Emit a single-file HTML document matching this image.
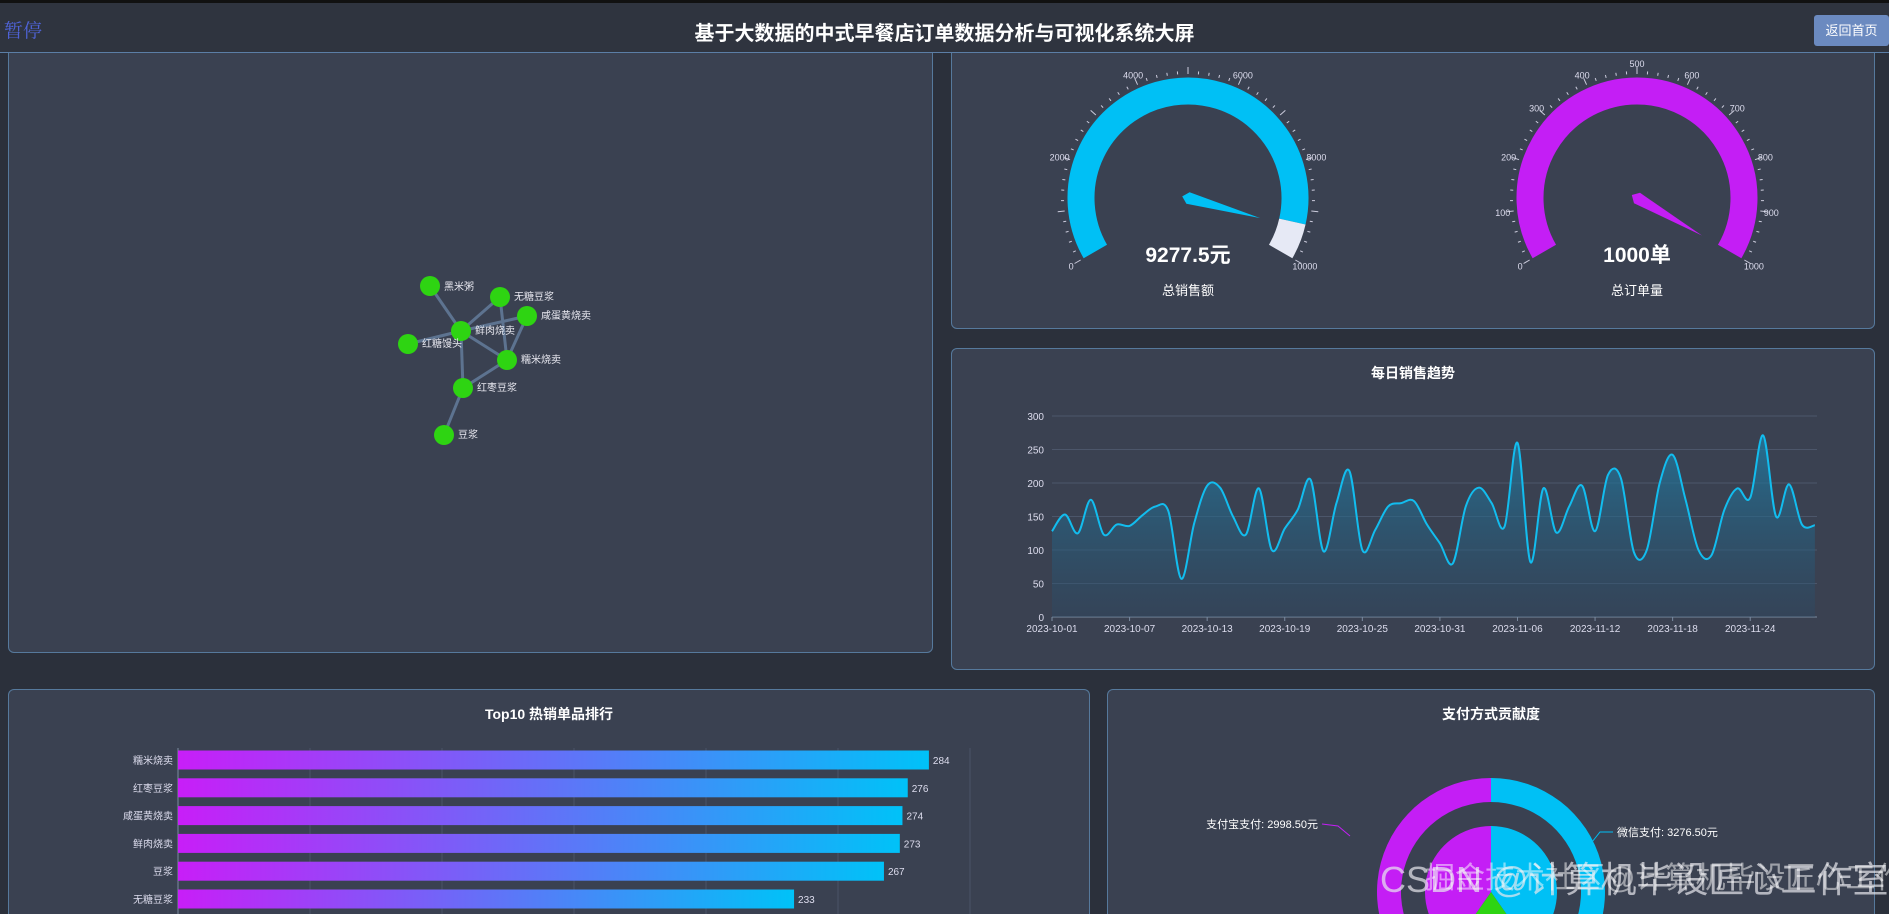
<!DOCTYPE html>
<html><head><meta charset="utf-8">
<style>
*{margin:0;padding:0;box-sizing:border-box}
body{width:1889px;height:914px;overflow:hidden;background:#2b303b;font-family:"Liberation Sans","Noto Sans CJK SC",sans-serif;position:relative;color:#fff}
.hdr{position:absolute;left:0;top:0;width:1889px;height:53px;background:#2f343f;border-top:3px solid #111;border-bottom:1px solid #5b7ea6}
.hdr h1{position:absolute;left:0;right:0;top:14px;text-align:center;font-size:20px;font-weight:bold;color:#fff}
.pause{position:absolute;left:4px;top:13px;font-size:19px;color:#4f63d8;font-family:"Noto Serif CJK SC",serif}
.btn{position:absolute;left:1814px;top:12px;width:75px;height:31px;background:#6b8ac0;border-radius:3px;font-size:13px;line-height:31px;text-align:center;color:#fff}
.p{position:absolute;background:#3a4151;border:1px solid #56799c;border-radius:6px}
.t{position:absolute;left:0;right:0;text-align:center;font-size:14px;font-weight:bold;color:#fff}
svg{position:absolute;left:0;top:0}
</style></head><body>
<div class="p" style="left:8px;top:40px;width:925px;height:613px"></div>
<div class="p" style="left:951px;top:40px;width:924px;height:289px"></div>
<div class="p" style="left:951px;top:348px;width:924px;height:322px"><div class="t" style="top:14px">每日销售趋势</div></div>
<div class="p" style="left:8px;top:689px;width:1082px;height:225px;border-bottom:none;border-radius:6px 6px 0 0"><div class="t" style="top:14px">Top10 热销单品排行</div></div>
<div class="p" style="left:1107px;top:689px;width:768px;height:225px;border-bottom:none;border-radius:6px 6px 0 0"><div class="t" style="top:14px">支付方式贡献度</div></div>
<div class="hdr"><div class="pause">暂停</div><h1>基于大数据的中式早餐店订单数据分析与可视化系统大屏</h1><div class="btn">返回首页</div></div>

<svg width="1889" height="914" id="s" font-family="Liberation Sans, Noto Sans CJK SC, sans-serif">
<defs>
<linearGradient id="ag" x1="0" x2="0" y1="0" y2="1"><stop offset="0" stop-color="#1e7fa8" stop-opacity=".75"/><stop offset="1" stop-color="#2a4a66" stop-opacity=".35"/></linearGradient>
</defs>
<g stroke="#5d7390" stroke-width="3">
<line x1="430" y1="286" x2="461" y2="331"/><line x1="500" y1="297" x2="461" y2="331"/><line x1="500" y1="297" x2="507" y2="360"/>
<line x1="527" y1="316" x2="461" y2="331"/><line x1="527" y1="316" x2="507" y2="360"/><line x1="461" y1="331" x2="408" y2="344"/>
<line x1="461" y1="331" x2="507" y2="360"/><line x1="461" y1="331" x2="463" y2="388"/><line x1="507" y1="360" x2="463" y2="388"/>
<line x1="463" y1="388" x2="444" y2="435"/></g>
<g fill="#2ed412"><circle cx="430" cy="286" r="10"/><circle cx="500" cy="297" r="10"/><circle cx="527" cy="316" r="10"/><circle cx="461" cy="331" r="10"/><circle cx="408" cy="344" r="10"/><circle cx="507" cy="360" r="10"/><circle cx="463" cy="388" r="10"/><circle cx="444" cy="435" r="10"/></g>
<g fill="#e8e8f0" font-size="10"><text x="444" y="290">黑米粥</text><text x="514" y="300">无糖豆浆</text><text x="541" y="319">咸蛋黄烧卖</text><text x="475" y="334">鲜肉烧卖</text><text x="422" y="347">红糖馒头</text><text x="521" y="363">糯米烧卖</text><text x="477" y="391">红枣豆浆</text><text x="458" y="438">豆浆</text></g>
<g id="gauges"></g>
<g font-weight="bold" font-size="21" fill="#fff" text-anchor="middle"><text x="1188" y="262">9277.5元</text><text x="1637" y="262">1000单</text></g>
<g font-size="13" fill="#fff" text-anchor="middle"><text x="1188" y="295">总销售额</text><text x="1637" y="295">总订单量</text></g>
<g id="trend"></g>
<g id="bars"></g>
<g id="pie"></g>
<g font-size="11" fill="#fff"><text x="1318" y="828" text-anchor="end">支付宝支付: 2998.50元</text><text x="1617" y="836">微信支付: 3276.50元</text></g>
<polyline points="1322,824 1338,826 1350,836" fill="none" stroke="#c41ef5"/>
<polyline points="1613,832 1600,832 1592,842" fill="none" stroke="#00c0f5"/>
<g font-size="36" fill="#e8e8ee" opacity=".7"><text x="1380" y="892">CSDN @计算机毕设匠心工作室</text></g>
<g font-size="30" fill="#fff" opacity=".5"><text x="1425" y="888">掘金技术社区@计算机毕设匠心工作室</text></g>
</svg>
<script>
var NS="http://www.w3.org/2000/svg";
function el(p,t,a,txt){var e=document.createElementNS(NS,t);for(var k in a)e.setAttribute(k,a[k]);if(txt!=null)e.textContent=txt;p.appendChild(e);return e;}
function pt(cx,cy,r,deg){var a=deg*Math.PI/180;return [cx+r*Math.cos(a),cy-r*Math.sin(a)];}
function arc(g,cx,cy,r,a0,a1,col,w){var p0=pt(cx,cy,r,a0),p1=pt(cx,cy,r,a1);var large=(a0-a1)>180?1:0;
el(g,"path",{d:"M"+p0[0]+" "+p0[1]+" A"+r+" "+r+" 0 "+large+" 1 "+p1[0]+" "+p1[1],fill:"none",stroke:col,"stroke-width":w});}
var G=document.getElementById("gauges");
function gauge(cx,col,frac,labels,needleFrac){
 var cy=198,r=107;
 var split=210-240*frac;
 arc(G,cx,cy,r,210,split,col,27);
 if(frac<1)arc(G,cx,cy,r,split,-30,"#e6e9f5",27);
 for(var i=0;i<=50;i++){var a=210-240*i/50;var L=i%5==0?7:3;var p0=pt(cx,cy,124,a),p1=pt(cx,cy,124+L,a);
  el(G,"line",{x1:p0[0],y1:p0[1],x2:p1[0],y2:p1[1],stroke:"#ccd","stroke-width":1});}
 labels.forEach(function(l,i){var a=210-240*i/(labels.length-1);var p=pt(cx,cy,135,a);
  el(G,"text",{x:p[0],y:p[1]+4,"font-size":9,fill:"#dde","text-anchor":"middle"},l);});
 var na=210-240*needleFrac;var tip=pt(cx,cy,75,na),b1=pt(cx,cy,6,na+90),b2=pt(cx,cy,6,na-90),bk=pt(cx,cy,-6,na);
 el(G,"path",{d:"M"+tip+" L"+b1+" L"+bk+" L"+b2+"Z",fill:col});
}
gauge(1188,"#00c0f5",0.928,["0","2000","4000","6000","8000","10000"],0.94);
gauge(1637,"#c41ef5",1,["0","100","200","300","400","500","600","700","800","900","1000"],1.0);
var T=document.getElementById("trend");
var v=[128,153,125,175,123,138,136,152,165,158,57,140,196,193,150,123,192,100,132,160,205,98,170,218,100,130,165,170,173,138,110,80,165,193,170,135,260,82,192,126,165,196,128,212,207,97,100,200,242,175,100,92,160,192,178,271,150,198,138,137];
var x0=1052,dx=12.93,y0=617,sy=201/300;
for(var i=0;i<=6;i++){var y=y0-i*50*sy;el(T,"line",{x1:x0,y1:y,x2:1817,y2:y,stroke:i?"#4c566a":"#7a8aa0","stroke-width":1});
 el(T,"text",{x:x0-8,y:y+4,"font-size":10,fill:"#dde","text-anchor":"end"},i*50);}
var P=v.map(function(a,i){return [x0+i*dx,y0-a*sy];});
var d="M"+P[0][0]+" "+P[0][1];
for(var i=0;i<P.length-1;i++){var p0=P[Math.max(0,i-1)],p1=P[i],p2=P[i+1],p3=P[Math.min(P.length-1,i+2)];
 var c1=[p1[0]+(p2[0]-p0[0])/6,p1[1]+(p2[1]-p0[1])/6],c2=[p2[0]-(p3[0]-p1[0])/6,p2[1]-(p3[1]-p1[1])/6];
 d+=" C"+c1+" "+c2+" "+p2;}
el(T,"path",{d:d+" L"+P[P.length-1][0]+" "+y0+" L"+x0+" "+y0+"Z",fill:"url(#ag)"});
el(T,"path",{d:d,fill:"none",stroke:"#12bdef","stroke-width":2});
var labs=["2023-10-01","2023-10-07","2023-10-13","2023-10-19","2023-10-25","2023-10-31","2023-11-06","2023-11-12","2023-11-18","2023-11-24"];
labs.forEach(function(l,i){var x=x0+i*6*dx;el(T,"line",{x1:x,y1:y0,x2:x,y2:y0+4,stroke:"#7a8aa0"});el(T,"text",{x:x,y:y0+15,"font-size":10,fill:"#dde","text-anchor":"middle"},l);});
var B=document.getElementById("bars");
for(var k=0;k<=6;k++){var x=178+132*k;el(B,"line",{x1:x,y1:748,x2:x,y2:914,stroke:k?"#4a5366":"#7a8aa0"});}
var defs=document.querySelector("defs");
[["糯米烧卖",284],["红枣豆浆",276],["咸蛋黄烧卖",274],["鲜肉烧卖",273],["豆浆",267],["无糖豆浆",233]].forEach(function(b,i){
 var y=760+i*27.8;var w=b[1]*2.644;
 var id="g"+i;var lg=el(defs,"linearGradient",{id:id,x1:0,x2:1,y1:0,y2:0});
 el(lg,"stop",{offset:0,"stop-color":"#c81ef8"});el(lg,"stop",{offset:1,"stop-color":"#00c2f8"});
 el(B,"rect",{x:178,y:y-9.5,width:w,height:19,fill:"url(#"+id+")"});
 el(B,"text",{x:173,y:y+4,"font-size":10,fill:"#dde","text-anchor":"end"},b[0]);
 el(B,"text",{x:182+w,y:y+4,"font-size":10,fill:"#dde"},b[1]);});
var PI=document.getElementById("pie");
function sector(cx,cy,r0,r1,a0,a1,col){
 function q(r,a){var t=(a-90)*Math.PI/180;return [cx+r*Math.cos(t),cy+r*Math.sin(t)];}
 var lg=(a1-a0)>180?1:0;var A=q(r1,a0),Bp=q(r1,a1);
 var d="M"+A+" A"+r1+" "+r1+" 0 "+lg+" 1 "+Bp;
 if(r0>0){var C=q(r0,a1),D=q(r0,a0);d+=" L"+C+" A"+r0+" "+r0+" 0 "+lg+" 0 "+D+"Z";}else d+=" L"+cx+" "+cy+"Z";
 el(PI,"path",{d:d,fill:col});}
var cx=1491,cy=892;
sector(cx,cy,90,114,0,150,"#00c0f5");sector(cx,cy,90,114,150,210,"#2ed412");sector(cx,cy,90,114,210,360,"#c41ef5");
sector(cx,cy,0,66,0,145,"#00c0f5");sector(cx,cy,0,66,145,215,"#2ed412");sector(cx,cy,0,66,215,360,"#c41ef5");
</script>
</body></html>
